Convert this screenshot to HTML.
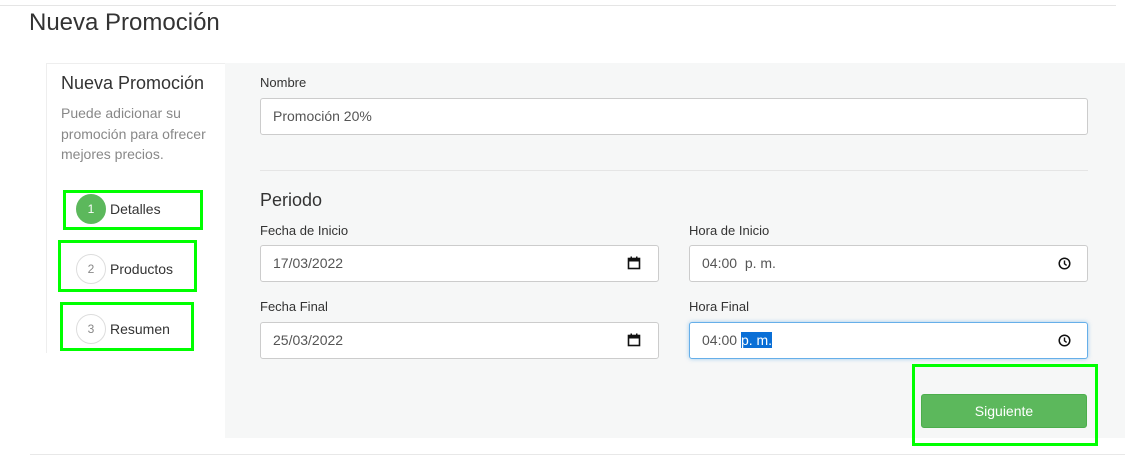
<!DOCTYPE html>
<html><head><style>
*{box-sizing:border-box;margin:0;padding:0}
body{width:1125px;height:463px;background:#fff;font-family:"Liberation Sans",sans-serif;position:relative;overflow:hidden;color:#333}
.a{position:absolute}
.inp{position:absolute;background:#fff;border:1px solid #ccc;border-radius:3px;height:37px;font-size:14px;color:#555;padding:0 12px;line-height:35px}
.lbl{position:absolute;font-size:13px;color:#333}
.g{position:absolute;border:3px solid #00ff00}
.circ{position:absolute;width:30px;height:30px;border-radius:50%;border:1px solid #ddd;font-size:12px;color:#888;text-align:center;line-height:28px}
.step{position:absolute;font-size:14px;color:#333}
</style></head><body>
<div class="a" style="left:0;top:5px;width:1116px;height:1px;background:#e5e5e5"></div>
<div class="a" style="left:29px;top:9px;font-size:24px;color:#333">Nueva Promoción</div>
<div class="a" style="left:46px;top:63px;width:179px;height:290px;border:1px solid #eee;border-bottom:none;border-right:none"></div>
<div class="a" style="left:225px;top:63px;width:900px;height:375px;background:#f6f7f7"></div>
<div class="a" style="left:30px;top:454px;width:1095px;height:1px;background:#e8e8e8"></div>
<div class="a" style="left:61px;top:73px;font-size:18px;color:#333">Nueva Promoción</div>
<div class="a" style="left:61px;top:103px;font-size:14px;color:#888;line-height:20.5px;width:160px">Puede adicionar su promoción para ofrecer mejores precios.</div>

<div class="circ" style="left:76px;top:194px;background:#5cb85c;border-color:#5cb85c;color:#fff">1</div>
<div class="step" style="left:110px;top:201px">Detalles</div>
<div class="g" style="left:63px;top:190px;width:140px;height:40px"></div>
<div class="circ" style="left:76px;top:254px">2</div>
<div class="step" style="left:110px;top:261px">Productos</div>
<div class="g" style="left:58px;top:240px;width:139px;height:52px"></div>
<div class="circ" style="left:76px;top:314px">3</div>
<div class="step" style="left:110px;top:321px">Resumen</div>
<div class="g" style="left:60px;top:302px;width:134px;height:49px"></div>

<div class="lbl" style="left:260px;top:75px">Nombre</div>
<div class="inp" style="left:260px;top:98px;width:828px">Promoción 20%</div>
<div class="a" style="left:260px;top:170px;width:828px;height:1px;background:#e5e5e5"></div>
<div class="a" style="left:260px;top:190px;font-size:18px;color:#333">Periodo</div>
<div class="lbl" style="left:260px;top:223px">Fecha de Inicio</div>
<div class="inp" style="left:260px;top:245px;width:399px">17/03/2022</div>
<div class="lbl" style="left:689px;top:223px">Hora de Inicio</div>
<div class="inp" style="left:689px;top:245px;width:399px">04:00 &nbsp;p. m.</div>
<div class="lbl" style="left:260px;top:299px">Fecha Final</div>
<div class="inp" style="left:260px;top:322px;width:399px">25/03/2022</div>
<div class="lbl" style="left:689px;top:299px">Hora Final</div>
<div class="inp" style="left:689px;top:322px;width:399px;border-color:#66afe9;box-shadow:0 0 4px rgba(102,175,233,.6)">04:00 <span style="background:#0a6fd6;color:#fff">p. m.</span></div>

<svg class="a" style="left:627px;top:256px" width="14" height="14" viewBox="0 0 14 14"><rect x="1.5" y="2.5" width="11" height="10" fill="none" stroke="#111" stroke-width="1.6"/><rect x="1.5" y="2.5" width="11" height="3" fill="#111"/><rect x="3.5" y="0.5" width="1.5" height="3" fill="#111"/><rect x="9" y="0.5" width="1.5" height="3" fill="#111"/></svg>
<svg class="a" style="left:627px;top:333px" width="14" height="14" viewBox="0 0 14 14"><rect x="1.5" y="2.5" width="11" height="10" fill="none" stroke="#111" stroke-width="1.6"/><rect x="1.5" y="2.5" width="11" height="3" fill="#111"/><rect x="3.5" y="0.5" width="1.5" height="3" fill="#111"/><rect x="9" y="0.5" width="1.5" height="3" fill="#111"/></svg>
<svg class="a" style="left:1058px;top:257px" width="13" height="13" viewBox="0 0 13 13"><circle cx="6.5" cy="6.5" r="5.3" fill="none" stroke="#111" stroke-width="1.5"/><path d="M6.5 3.5V6.8L8.6 8.4" fill="none" stroke="#111" stroke-width="1.4"/></svg>
<svg class="a" style="left:1058px;top:334px" width="13" height="13" viewBox="0 0 13 13"><circle cx="6.5" cy="6.5" r="5.3" fill="none" stroke="#111" stroke-width="1.5"/><path d="M6.5 3.5V6.8L8.6 8.4" fill="none" stroke="#111" stroke-width="1.4"/></svg>

<div class="a" style="left:921px;top:394px;width:166px;height:34px;background:#5cb85c;border:1px solid #4cae4c;border-radius:3px;color:#fff;font-size:14px;text-align:center;line-height:32px">Siguiente</div>
<div class="g" style="left:912px;top:364px;width:186px;height:82px"></div>
</body></html>
